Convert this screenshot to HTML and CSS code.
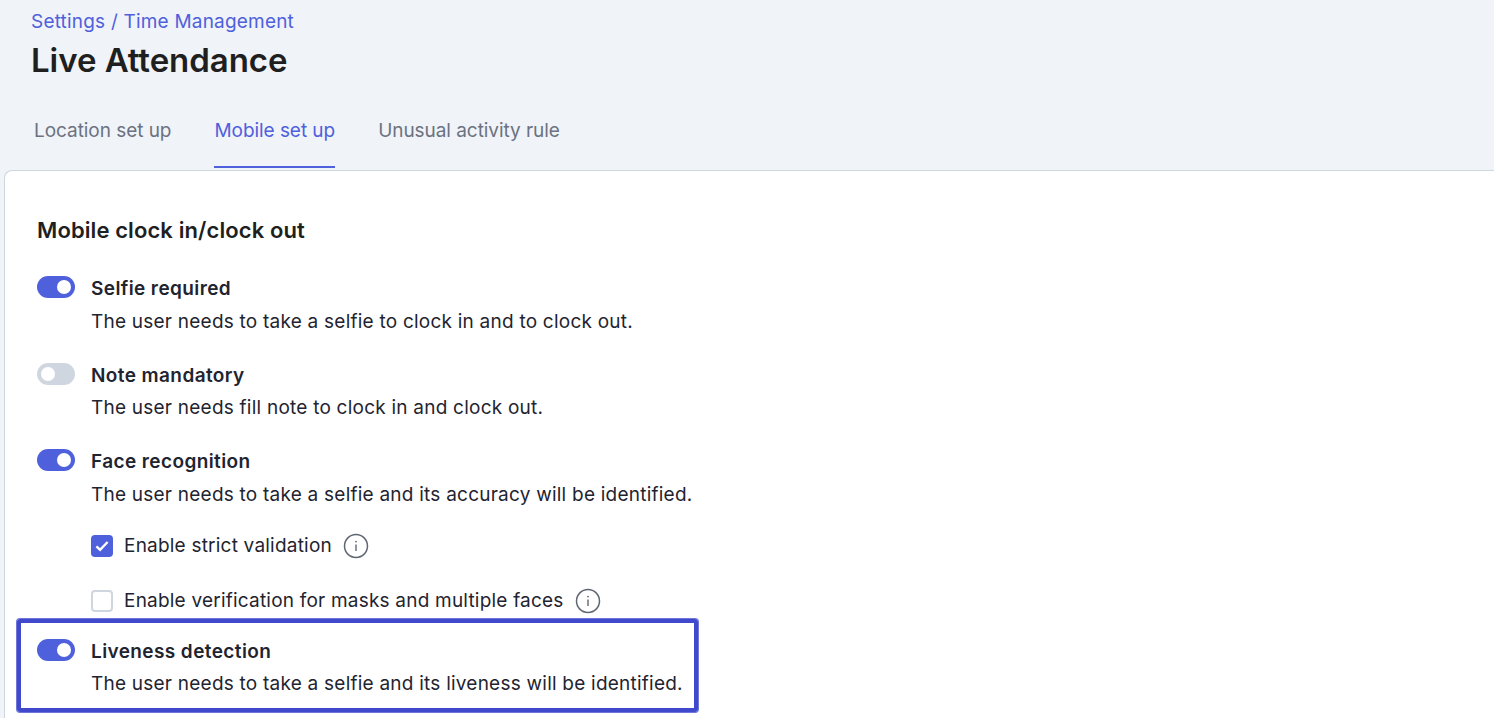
FILE: index.html
```html
<!DOCTYPE html>
<html lang="en">
<head>
    <meta charset="UTF-8" />
    <meta name="viewport" content="width=device-width, initial-scale=1" />
    <title>Live Attendance</title>
    <link rel="stylesheet" href="styles.css">
</head>
<body>

    <header class="encabezado">
        <a class="breadcrumb">Settings / Time Management</a>
        <h1>Live Attendance</h1>
    </header>

    <nav class="tabs">
        <a class="tab">Location set up</a>
        <a class="tab activo">Mobile set up</a>
        <a class="tab">Unusual activity rule</a>
    </nav>

    <main class="card">
        <h2>Mobile clock in/clock out</h2>

        <div class="opcion">
            <span class="toggle on"></span>
            <div>
                <h3>Selfie required</h3>
                <p>The user needs to take a selfie to clock in and to clock out.</p>
            </div>
        </div>

        <div class="opcion">
            <span class="toggle"></span>
            <div>
                <h3>Note mandatory</h3>
                <p>The user needs fill note to clock in and clock out.</p>
            </div>
        </div>

        <div class="opcion">
            <span class="toggle on"></span>
            <div>
                <h3>Face recognition</h3>
                <p>The user needs to take a selfie and its accuracy will be identified.</p>
            </div>
        </div>

        <div class="check-fila primera">
            <span class="check marcado">
                <svg width="18" height="18" viewBox="0 0 18 18"><path d="M3.4 9.4l3.7 3.5 7.5-7.9" fill="none" stroke="#fff" stroke-width="2.4"/></svg>
            </span>
            <span>Enable strict validation</span>
            <svg class="info" width="26" height="26" viewBox="0 0 26 26"><circle cx="13" cy="13" r="11.5" fill="none" stroke="#5f6673" stroke-width="1.5"/><path d="M13 11.5v6.5" stroke="#5f6673" stroke-width="1.4"/><circle cx="13" cy="8.6" r="0.9" fill="#5f6673"/></svg>
        </div>

        <div class="check-fila segunda">
            <span class="check"></span>
            <span>Enable verification for masks and multiple faces</span>
            <svg class="info" width="26" height="26" viewBox="0 0 26 26"><circle cx="13" cy="13" r="11.5" fill="none" stroke="#5f6673" stroke-width="1.5"/><path d="M13 11.5v6.5" stroke="#5f6673" stroke-width="1.4"/><circle cx="13" cy="8.6" r="0.9" fill="#5f6673"/></svg>
        </div>

        <div class="opcion resaltado">
            <span class="toggle on"></span>
            <div>
                <h3>Liveness detection</h3>
                <p>The user needs to take a selfie and its liveness will be identified.</p>
            </div>
        </div>
    </main>

</body>
</html>
```

FILE: styles.css
```css
html, body {
    height: 718px;
    overflow: hidden;
}

body {
    font-family: 'Inter', 'Liberation Sans', sans-serif;
    background-color: #f0f3f8;
    margin: 0;
    color: #1f2430;
}

.encabezado {
    padding: 10px 0 0 31px;
}

.breadcrumb {
    display: block;
    font-size: 19px;
    letter-spacing: 0.2px;
    line-height: 24px;
    color: #4f60dc;
}

h1 {
    margin: 4px 0 0;
    font-size: 33px;
    letter-spacing: -0.05px;
    line-height: 44px;
    font-weight: 600;
    color: #1f1f1f;
}

.tabs {
    display: flex;
    gap: 43px;
    margin-top: 31px;
    padding-left: 34px;
}

.tab {
    height: 55px;
    font-size: 19px;
    letter-spacing: -0.05px;
    line-height: 24px;
    color: #6b7280;
    box-sizing: border-box;
    padding-top: 6px;
}

.tab.activo {
    color: #4f60dc;
    border-bottom: 2px solid #4f60dc;
}

.card {
    margin: 2px 0 0 4px;
    height: 548px;
    box-sizing: border-box;
    padding: 45px 0 0 32px;
    background-color: white;
    border: 1px solid #d0d6e0;
    border-right: none;
    border-bottom: none;
    border-radius: 8px 0 0 0;
}

h2 {
    margin: 0 0 33px;
    font-size: 22px;
    letter-spacing: 0.1px;
    line-height: 28px;
    font-weight: 600;
    color: #1f1f1f;
}

.opcion {
    display: flex;
    gap: 16px;
    margin-bottom: 30px;
}

h3 {
    margin: 0;
    font-size: 19px;
    letter-spacing: 0.4px;
    line-height: 24px;
    font-weight: 600;
}

p {
    margin: 8.5px 0 0;
    font-size: 19px;
    letter-spacing: 0.23px;
    line-height: 24px;
}

.toggle {
    flex: none;
    position: relative;
    width: 38px;
    height: 22px;
    margin-top: -1px;
    border-radius: 11px;
    background-color: #d0d6e0;
}

.toggle::after {
    content: "";
    position: absolute;
    top: 4px;
    left: 4px;
    width: 14px;
    height: 14px;
    border-radius: 50%;
    background-color: white;
}

.toggle.on {
    background-color: #4f60dc;
}

.toggle.on::after {
    left: 20px;
}

.check-fila {
    display: flex;
    align-items: center;
    gap: 11px;
    margin-left: 54px;
    font-size: 19px;
    letter-spacing: 0.21px;
    line-height: 24px;
}

.check-fila.primera {
    margin-top: -4px;
}

.check-fila.segunda {
    margin-top: 29px;
}

.check {
    flex: none;
    display: flex;
    align-items: center;
    justify-content: center;
    width: 22px;
    height: 22px;
    box-sizing: border-box;
    border: 2px solid #d0d6e0;
    border-radius: 4px;
    background-color: white;
}

.check.marcado {
    border: none;
    background-color: #4f60dc;
}

.info {
    flex: none;
}

.opcion.resaltado {
    width: 681px;
    height: 93px;
    box-sizing: border-box;
    margin: 5.5px 0 0 -20px;
    padding: 16.5px 0 0 16px;
    border: 4px solid #4048cc;
    border-radius: 3px;
    box-shadow: 0 0 0 1px #6f76da;
}
```
